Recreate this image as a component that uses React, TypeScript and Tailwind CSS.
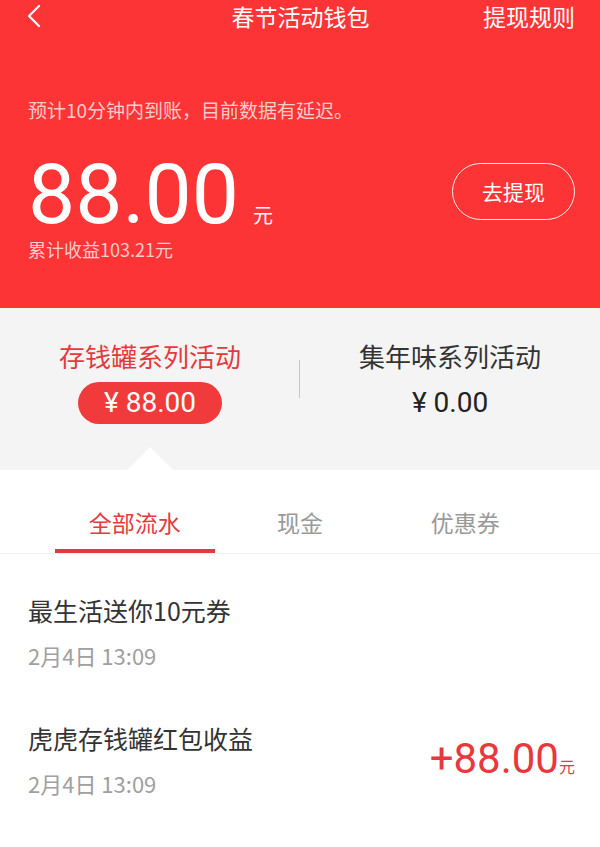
const cjk = "font-['Noto_Sans_CJK_SC','Noto_Sans',sans-serif]";
const num = "font-['Roboto','Noto_Sans_CJK_SC',sans-serif]";

function BackIcon() {
  return (
    <svg width="16" height="24" viewBox="0 0 16 24" fill="none">
      <polyline points="13,2 3,12 13,22" stroke="white" strokeWidth="2.2" strokeLinecap="round" strokeLinejoin="round" />
    </svg>
  );
}

function Header() {
  return (
    <div className="bg-[#fc3435] h-[308px] text-white">
      <div className="grid grid-cols-[1fr_auto_1fr] items-center h-[32px] pl-[26px] pr-[25px]">
        <BackIcon />
        <div className="text-[23px] leading-[32px]">春节活动钱包</div>
        <div className="text-[23px] leading-[32px] justify-self-end">提现规则</div>
      </div>
      <div className="mt-[64px] pl-[28px] text-[19px] leading-[28px] text-white/75">
        预计10分钟内到账，目前数据有延迟。
      </div>
      <div className="mt-[30px] flex justify-between pl-[28px] pr-[25px]">
        <div>
          <div className="flex items-baseline h-[82px]">
            <span className={`${num} text-[84px] leading-[82px] font-normal`}>88.00</span>
            <span className="ml-[14px] text-[20px] leading-none">元</span>
          </div>
          <div className="mt-[2px] text-[18px] leading-[22px] text-white/75">累计收益103.21元</div>
        </div>
        <div className="mt-[9px] w-[123px] h-[57px] rounded-full border-[1.5px] border-white/90 flex items-center justify-center text-[21px]">
          去提现
        </div>
      </div>
    </div>
  );
}

function Activities() {
  return (
    <div className="relative bg-[#f4f4f4] h-[162px] grid grid-cols-2">
      <div className="flex flex-col items-center pt-[31px]">
        <div className="text-[26px] leading-[34px] text-[#e53a3d]">存钱罐系列活动</div>
        <div className="mt-[9px] w-[144px] h-[42px] rounded-full bg-[#f03a3b] text-white flex items-center justify-center text-[28px]">
          <span className={num}>¥ 88.00</span>
        </div>
      </div>
      <div className="flex flex-col items-center pt-[31px]">
        <div className="text-[26px] leading-[34px] text-[#333]">集年味系列活动</div>
        <div className={`${num} mt-[9px] h-[42px] flex items-center text-[28px] text-[#222]`}>¥ 0.00</div>
      </div>
      <div className="absolute left-[299px] top-[52px] w-px h-[38px] bg-[#c8c8c8]" />
      <svg className="absolute left-[127px] bottom-0" width="46" height="23" viewBox="0 0 46 23">
        <polygon points="0,23 23,0 46,23" fill="white" />
      </svg>
    </div>
  );
}

function Tabs() {
  const tabs = ["全部流水", "现金", "优惠券"];
  return (
    <div className="pt-[37px] border-b border-[#eeeeee]">
      <div className="grid grid-cols-3 px-[52px]">
        {tabs.map((t, i) => (
          <div key={t} className="flex flex-col items-center">
            <div className={`text-[23px] leading-[30px] ${i === 0 ? "text-[#e53a3d]" : "text-[#999]"}`}>{t}</div>
            <div className={`mt-[12px] w-[160px] h-[4px] ${i === 0 ? "bg-[#e53a3d]" : "bg-transparent"}`} />
          </div>
        ))}
      </div>
    </div>
  );
}

const records = [
  { title: "最生活送你10元券", time: "2月4日 13:09", amount: "" },
  { title: "虎虎存钱罐红包收益", time: "2月4日 13:09", amount: "+88.00" },
];

function Records() {
  return (
    <div className="mt-[13px]">
      {records.map((r) => (
        <div key={r.title} className="flex items-center justify-between py-[26px] pl-[28px] pr-[25px]">
          <div>
            <div className="text-[25px] leading-[34px] text-[#333]">{r.title}</div>
            <div className="mt-[14px] text-[22px] leading-[28px] text-[#a0a0a0]">{r.time}</div>
          </div>
          {r.amount && (
            <div className="flex items-baseline text-[#e8383d]">
              <span className={`${num} text-[42px] leading-none`}>{r.amount}</span>
              <span className="text-[16px]">元</span>
            </div>
          )}
        </div>
      ))}
    </div>
  );
}

export default function App() {
  return (
    <div className={`${cjk} w-[600px] h-[847px] bg-white overflow-hidden`}>
      <Header />
      <Activities />
      <Tabs />
      <Records />
    </div>
  );
}
